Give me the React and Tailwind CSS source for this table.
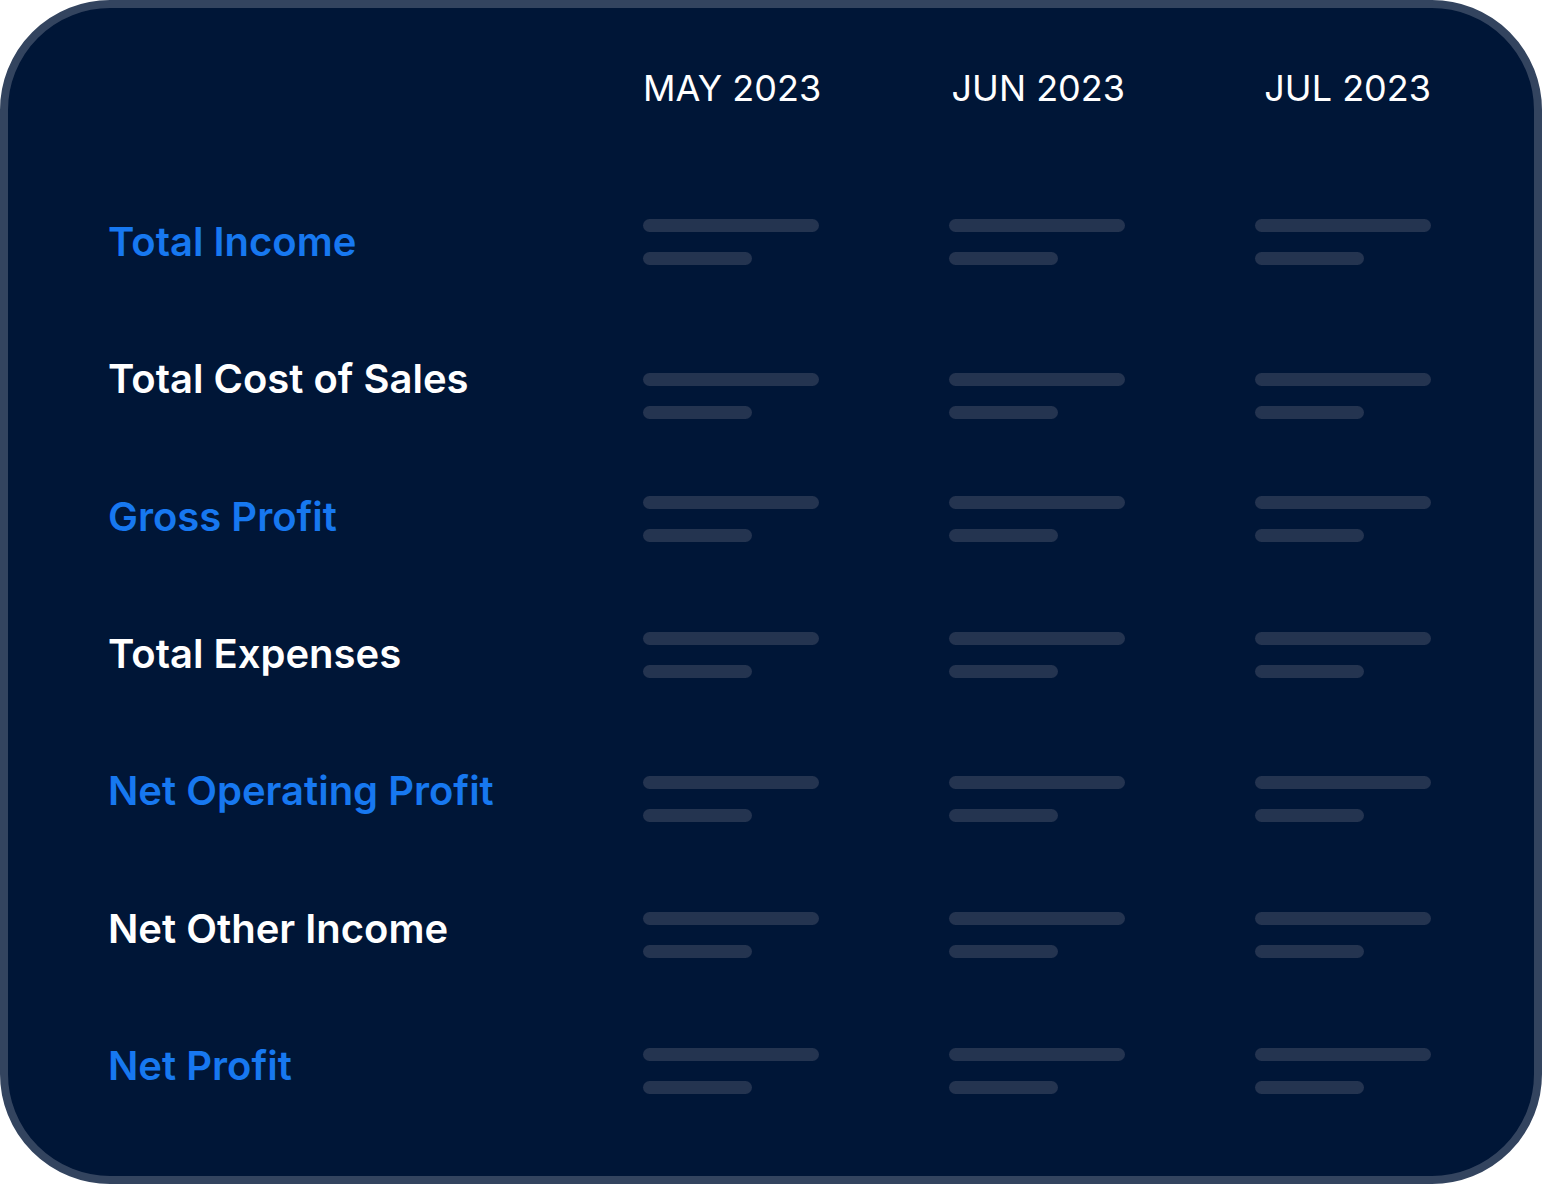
import React from 'react';

const months = ['MAY 2023', 'JUN 2023', 'JUL 2023'];

// label, highlighted, top offset of the bars inside the row
const rows = [
  { label: 'Total Income', blue: true, pt: 'pt-[45px]' },
  { label: 'Total Cost of Sales', blue: false, pt: 'pt-[62px]' },
  { label: 'Gross Profit', blue: true, pt: 'pt-[48px]' },
  { label: 'Total Expenses', blue: false, pt: 'pt-[47px]' },
  { label: 'Net Operating Profit', blue: true, pt: 'pt-[53px]' },
  { label: 'Net Other Income', blue: false, pt: 'pt-[52px]' },
  { label: 'Net Profit', blue: true, pt: 'pt-[51px]' },
];

function Placeholder() {
  return (
    <div className="flex flex-col gap-[20px]">
      <div className="h-[13px] w-[176px] rounded-full bg-[#243450]" />
      <div className="h-[13px] w-[109px] rounded-full bg-[#243450]" />
    </div>
  );
}

export default function App() {
  return (
    <div className="bg-white w-[1542px] h-[1184px]" style={{ fontFamily: 'Inter, "Liberation Sans", sans-serif' }}>
      <div className="w-[1542px] h-[1184px] rounded-[110px] border-8 border-[#33445f] bg-[#001637] pl-[100px] pt-[58px]">
        <div className="flex h-[44px] items-center">
          <div className="w-[535px]" />
          <div className="flex gap-[130px]">
            {months.map(m => (
              <div key={m} className="w-[176px] whitespace-nowrap text-right text-[36px] leading-[44px] text-white">{m}</div>
            ))}
          </div>
        </div>

        <div className="mt-[63.5px]">
          {rows.map(r => (
            <div key={r.label} className="flex h-[137.3px]">
              <div className={`w-[535px] flex items-center whitespace-nowrap text-[40px] font-semibold ${r.blue ? 'text-[#1778f0]' : 'text-white'}`}>
                {r.label}
              </div>
              <div className={`flex gap-[130px] ${r.pt}`}>
                {months.map(m => <Placeholder key={m} />)}
              </div>
            </div>
          ))}
        </div>
      </div>
    </div>
  );
}
